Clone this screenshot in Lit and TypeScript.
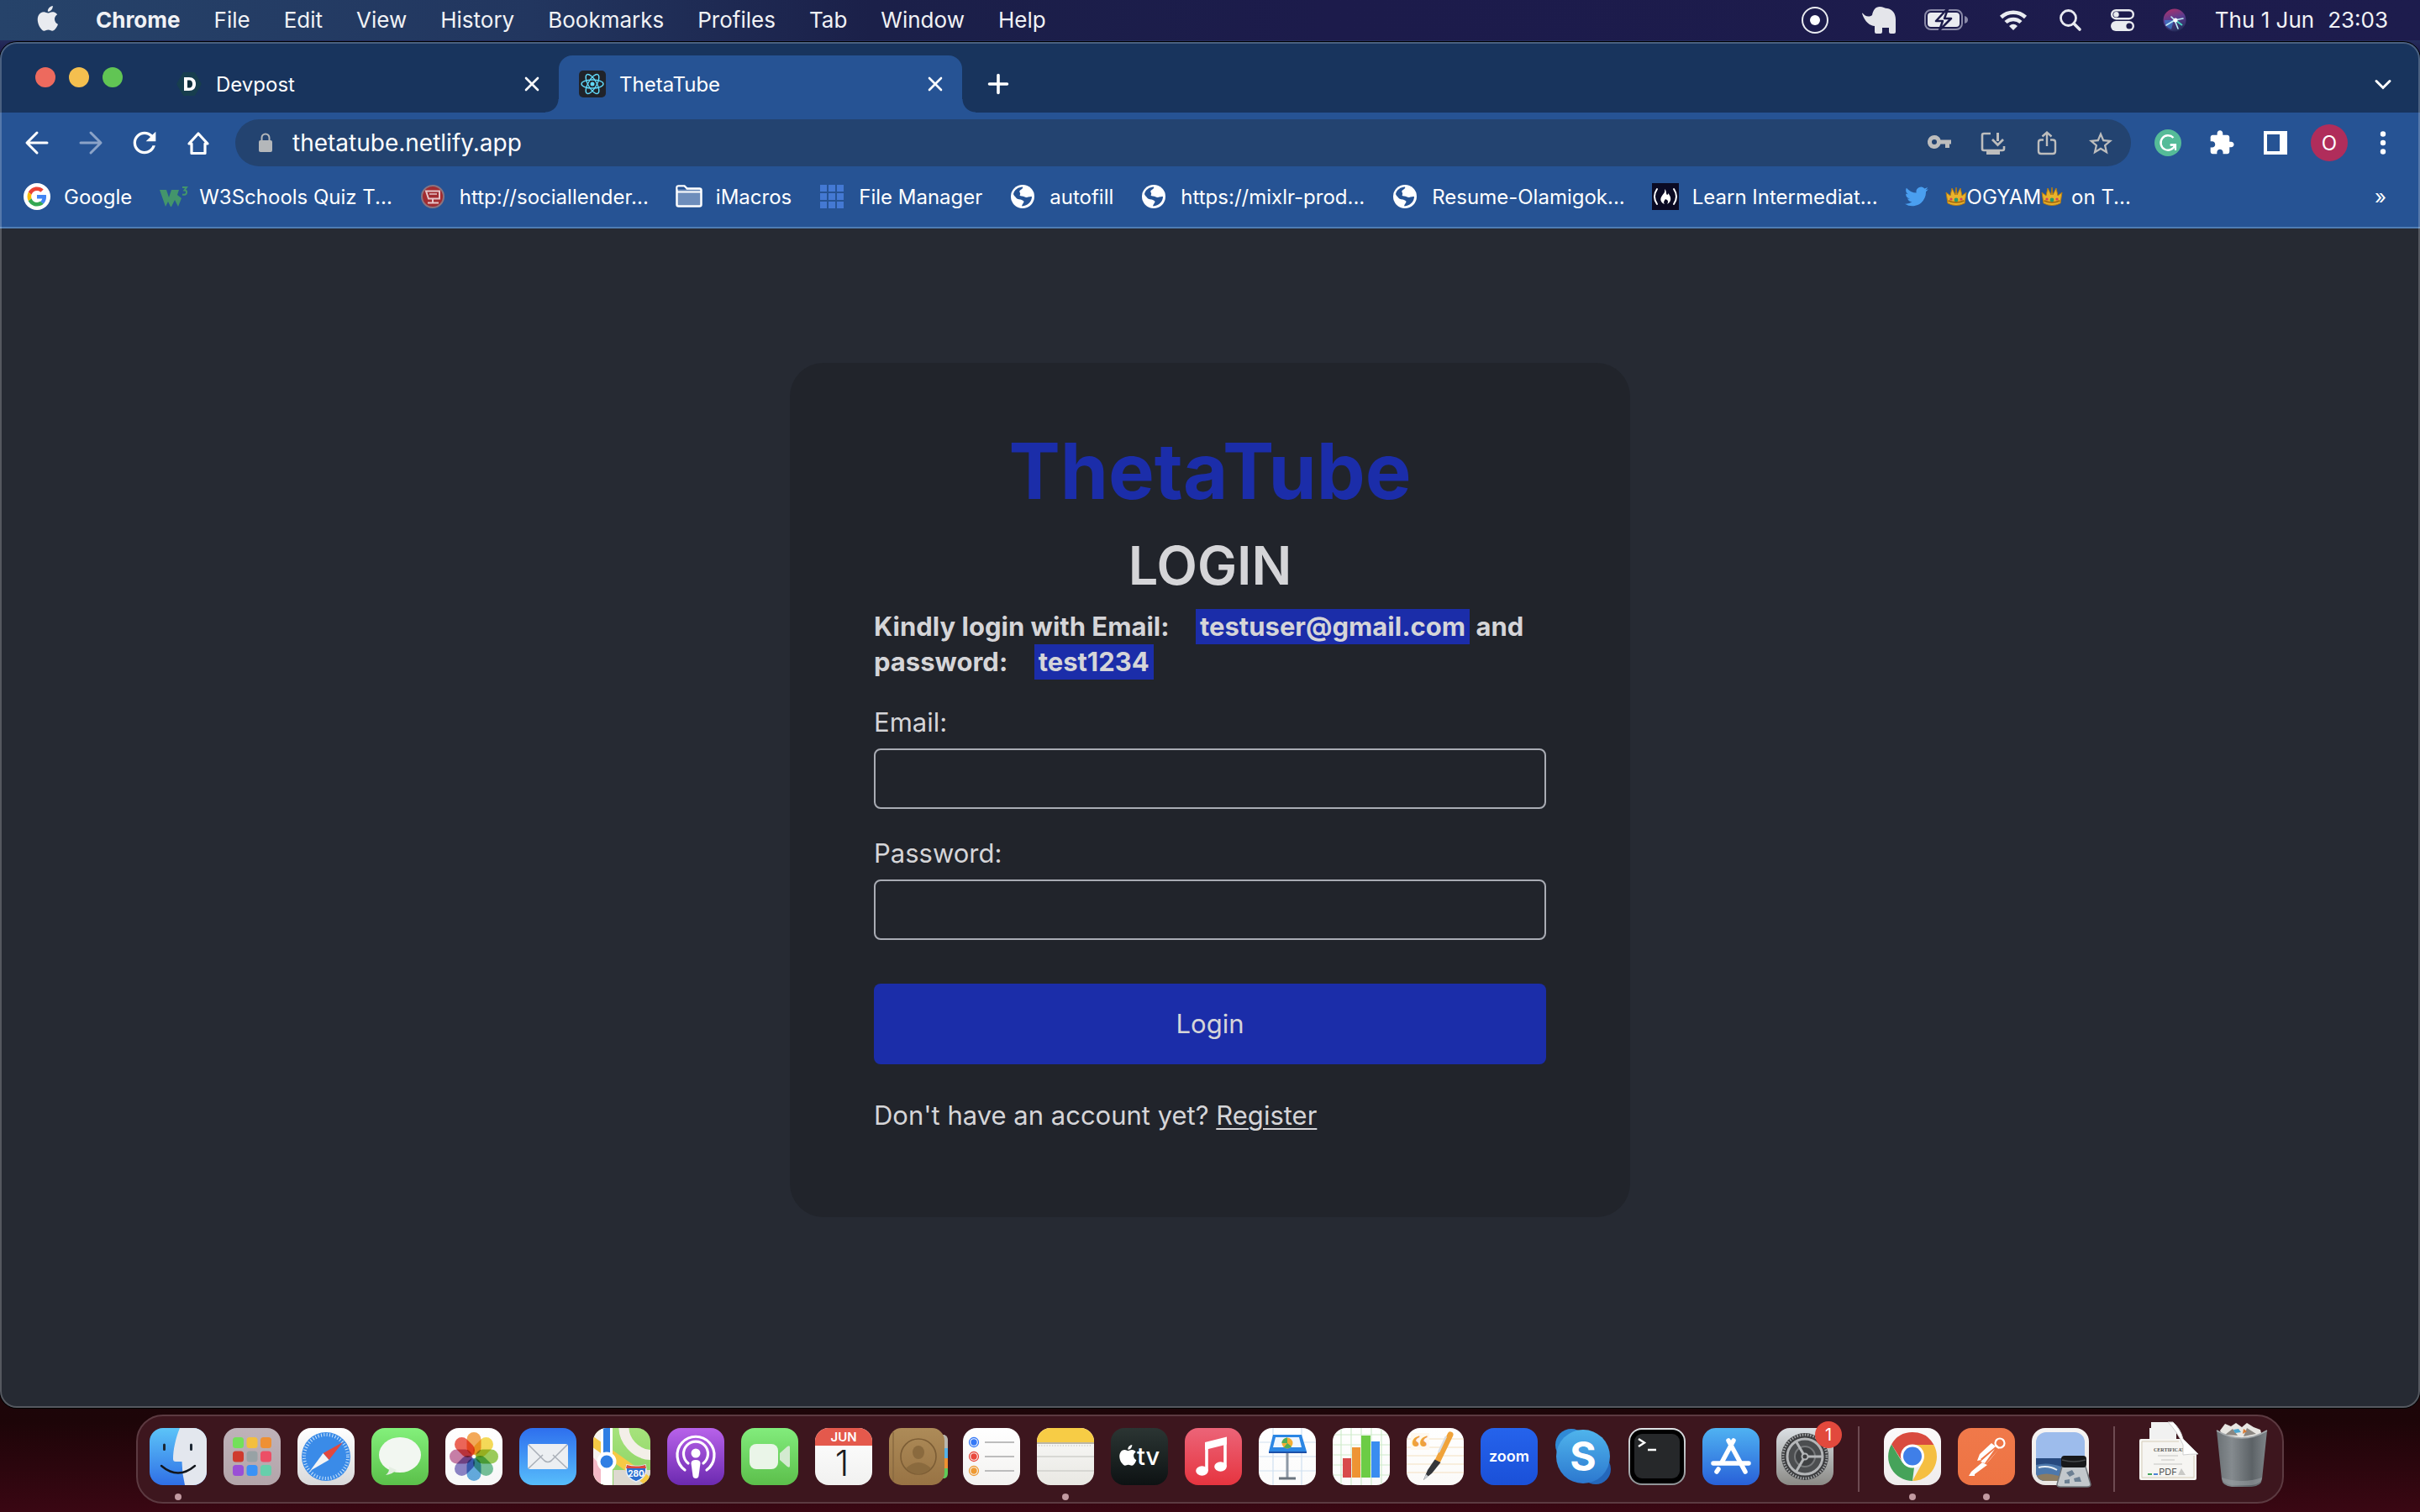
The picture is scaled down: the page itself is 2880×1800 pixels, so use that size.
import { LitElement, html, svg, css, nothing } from "lit";
import { customElement } from "lit/decorators.js";
import { classMap } from "lit/directives/class-map.js";

/* ---------- shared drawing helpers ---------- */

const APPLE =
  "M12.152 6.896c-.948 0-2.415-1.078-3.96-1.04-2.04.027-3.91 1.183-4.961 3.014-2.117 3.675-.546 9.103 1.519 12.09 1.013 1.454 2.208 3.09 3.792 3.039 1.52-.065 2.09-.987 3.935-.987 1.831 0 2.35.987 3.96.948 1.637-.026 2.676-1.48 3.676-2.948 1.156-1.688 1.636-3.325 1.662-3.415-.039-.013-3.182-1.221-3.22-4.857-.026-3.04 2.48-4.494 2.597-4.559-1.429-2.09-3.623-2.324-4.39-2.376-2-.156-3.675 1.09-4.61 1.09zM15.53 3.83c.843-1.012 1.4-2.427 1.245-3.83-1.207.052-2.662.805-3.532 1.818-.78.896-1.454 2.338-1.273 3.714 1.338.104 2.715-.688 3.559-1.701";

const icon32 = (body: unknown) =>
  html`<svg class="icon" width="32" height="32" viewBox="0 0 32 32" aria-hidden="true">${body}</svg>`;

const fade = (id: string, top: string, bottom: string) => svg`
  <linearGradient id=${id} x1="0" y1="0" x2="0" y2="1">
    <stop offset="0" stop-color=${top} /><stop offset="1" stop-color=${bottom} />
  </linearGradient>`;

const tile = (id: string, top: string, bottom: string, body: unknown) => svg`
  <defs>
    ${fade(id, top, bottom)}
    <clipPath id=${id + "-clip"}><rect width="68" height="68" rx="16" /></clipPath>
  </defs>
  <g clip-path=${`url(#${id}-clip)`}>
    <rect width="68" height="68" fill=${`url(#${id})`} />
    ${body}
  </g>`;

/* ---------- menu bar ---------- */

@customElement("menu-bar")
export class MenuBar extends LitElement {
  static styles = css`
    :host {
      display: block;
      font-family: Inter, "Liberation Sans", sans-serif;
    }
    .bar {
      display: flex;
      align-items: center;
      justify-content: space-between;
      height: 48px;
      padding: 0 38px 0 42px;
      background: linear-gradient(90deg, #26436a 0%, #22365f 22%, #1b2049 36%, #1c1b4b 55%, #1d1c4d 100%);
      color: #f1f2f5;
      font-size: 26px;
      line-height: 48px;
      white-space: nowrap;
    }
    .menus,
    .status {
      display: flex;
      align-items: center;
    }
    .menus {
      gap: 40px;
    }
    .status {
      gap: 34px;
    }
    .menu {
      border: 0;
      padding: 0;
      background: none;
      color: inherit;
      font: inherit;
    }
    .app {
      font-weight: 700;
    }
    .clock {
      display: flex;
      gap: 16px;
    }
    svg {
      display: block;
      flex: none;
    }
  `;

  private menus = ["Chrome", "File", "Edit", "View", "History", "Bookmarks", "Profiles", "Tab", "Window", "Help"];

  render() {
    return html`
      <header class="bar">
        <nav class="menus" aria-label="Menu bar">
          <svg width="32" height="48" viewBox="0 0 32 48" aria-hidden="true">
            <path transform="translate(0 7) scale(1.24)" fill="#e9ebf0" d=${APPLE} />
          </svg>
          ${this.menus.map(
            (name, i) => html`<button type="button" class=${classMap({ menu: true, app: i === 0 })}>${name}</button>`
          )}
        </nav>
        <div class="status">
          <svg width="44" height="34" viewBox="0 0 44 34" aria-hidden="true">
            <circle cx="22" cy="17" r="15" fill="none" stroke="#e9ebf0" stroke-width="2" />
            <circle cx="22" cy="17" r="6" fill="#fff" />
          </svg>
          <svg width="40" height="32" viewBox="0 0 40 32" aria-hidden="true">
            <path
              fill="#e4e5ea"
              d="M1 8C3 11 8 13 12 10c1-6 4-10 9-10 4 0 6 2 9 2 6 1 10 6 10 13v15q0 2-2 2h-4q-2 0-2-2v-5h-8v5q0 2-2 2h-5q-2 0-2-2v-7c-5 0-12-5-15-15q0-1 1 0z"
            />
          </svg>
          <svg width="52" height="26" viewBox="0 0 52 26" aria-hidden="true">
            <rect x="1" y="1" width="44" height="23" rx="7" fill="none" stroke="#8a8aa8" stroke-width="2" />
            <rect x="4" y="4" width="38" height="17" rx="4" fill="#e9ebf0" />
            <path d="M48 8q4 1 4 4.500t-4 4.500z" fill="#8a8aa8" />
            <path
              d="M27 0 14 14h8l-4 11 14-14h-8l4-11z"
              fill="#e9ebf0"
              stroke="#1c1b4b"
              stroke-width="2.500"
              stroke-linejoin="round"
            />
          </svg>
          <svg width="40" height="28" viewBox="0 0 40 28" aria-hidden="true" fill="none" stroke="#e9ebf0">
            <path d="M5.500 10.500a21 21 0 0 1 29 0" stroke-width="4.500" />
            <path d="M11 16.500a13 13 0 0 1 18 0" stroke-width="4.500" />
            <path d="M15 21q5-4.500 10 0l-5 5z" fill="#e9ebf0" stroke="none" />
          </svg>
          <svg width="28" height="28" viewBox="0 0 28 28" aria-hidden="true" fill="none" stroke="#e9ebf0">
            <circle cx="11.500" cy="11.500" r="9" stroke-width="2.800" />
            <path d="m18 18 7 7" stroke-width="3.600" stroke-linecap="round" />
          </svg>
          <svg width="28" height="28" viewBox="0 0 28 28" aria-hidden="true">
            <rect x="1.200" y="2.200" width="25.600" height="10" rx="5" fill="none" stroke="#e9ebf0" stroke-width="2.400" />
            <circle cx="6.500" cy="7.200" r="3.200" fill="#e9ebf0" />
            <rect y="15" width="28" height="12" rx="6" fill="#e9ebf0" />
            <circle cx="22" cy="21" r="3.600" fill="#1c1b4b" />
          </svg>
          <svg width="28" height="28" viewBox="0 0 28 28" aria-hidden="true">
            <defs>
              <linearGradient id="siri" x1="0.300" y1="0" x2="0.600" y2="1">
                <stop offset="0" stop-color="#a8326e" />
                <stop offset="0.450" stop-color="#5a3c8e" />
                <stop offset="1" stop-color="#232c58" />
              </linearGradient>
            </defs>
            <circle cx="14" cy="14" r="13.500" fill="url(#siri)" />
            <path d="M2 14a12 12 0 0 0 8 11l3-11z" fill="#3b7fd0" opacity="0.700" />
            <path d="m4 20 10-6 10-2M10 10l4 4 4 10" fill="none" stroke="#bfeef8" stroke-width="1.600" stroke-linecap="round" />
            <path d="m15 14 8 6" stroke="#46d7c0" stroke-width="2" />
            <circle cx="15" cy="14" r="2.500" fill="#fff" />
          </svg>
          <div class="clock"><span>Thu 1 Jun</span><span>23:03</span></div>
        </div>
      </header>
    `;
  }
}

/* ---------- browser chrome ---------- */

const CLOSE = html`<svg width="24" height="24" viewBox="0 0 24 24" aria-hidden="true">
  <path d="m5 5 14 14M19 5 5 19" stroke="#fff" stroke-width="2.600" stroke-linecap="round" />
</svg>`;

const DEVPOST = icon32(svg`
  <path d="M9 2h14l8 14-8 14H9L1 16z" fill="#173e4e" />
  <path d="M10 8h6c5 0 8 3 8 8s-3 8-8 8h-6z" fill="#fff" />
  <path d="M14 11.500h2c3 0 4 2 4 4.500s-1 4.500-4 4.500h-2z" fill="#10303c" />`);

const REACT = icon32(svg`
  <rect width="32" height="32" rx="5" fill="#20232a" />
  <g fill="none" stroke="#61dafb" stroke-width="1.400">
    <ellipse cx="16" cy="16" rx="13" ry="5" />
    <ellipse cx="16" cy="16" rx="13" ry="5" transform="rotate(60 16 16)" />
    <ellipse cx="16" cy="16" rx="13" ry="5" transform="rotate(120 16 16)" />
  </g>
  <circle cx="16" cy="16" r="2.500" fill="#61dafb" />`);

const GLOBE = icon32(svg`
  <circle cx="16" cy="16" r="14" fill="#fff" />
  <path d="M5 13c1-5 6-8.500 11-8.500 1 1-1 3-3 4-2 2 1 3 0 5-1 1 0 2 2 2 3 0 4 2 6 1.500 2-1 5-1 6-1 0 6-5 11-11.500 11.500-1-1 1-3 2-5 0-2-2-2-4-3-3 0-5-1-6-3-1-1-2-2-2.500-3.500z" fill="#265394" />`);

const BOOKMARK_ICONS = {
  google: icon32(svg`
    <circle cx="16" cy="16" r="16" fill="#fff" />
    <g transform="translate(4.500 4.500) scale(0.480)">
      <path fill="#ea4335" d="M24 9.500c3.540 0 6.710 1.220 9.210 3.600l6.850-6.850C35.900 2.380 30.470 0 24 0 14.620 0 6.510 5.380 2.560 13.220l7.980 6.190C12.430 13.720 17.740 9.500 24 9.500z" />
      <path fill="#4285f4" d="M46.980 24.550c0-1.570-.150-3.090-.380-4.550H24v9.020h12.940c-.580 2.960-2.260 5.480-4.780 7.180l7.730 6c4.510-4.180 7.090-10.360 7.090-17.650z" />
      <path fill="#fbbc05" d="M10.530 28.590c-.480-1.450-.760-2.990-.760-4.590s.270-3.140.760-4.590l-7.980-6.190C.920 16.460 0 20.120 0 24c0 3.880.920 7.540 2.560 10.780l7.970-6.190z" />
      <path fill="#34a853" d="M24 48c6.480 0 11.930-2.130 15.890-5.810l-7.730-6c-2.150 1.450-4.920 2.300-8.160 2.300-6.260 0-11.570-4.220-13.470-9.910l-7.980 6.190C6.510 42.620 14.620 48 24 48z" />
    </g>`),
  w3: icon32(svg`
    <path d="M1 8h8l3 9 3-9h9l-2 6 5 4-4 10-4-8-4 8h-1l-3-6-3 6z" fill="#43956b" />
    <path d="M28 5h5l-2.500 3.500q3 0 2.500 3t-5 2" fill="none" stroke="#43956b" stroke-width="2" />`),
  cart: icon32(svg`
    <circle cx="16" cy="16" r="13" fill="#a12c31" stroke="#8a7480" stroke-width="2" />
    <path d="M8 9.500h16v9H11zM16 19v4M10 23.500h13" fill="none" stroke="#e6c4c8" stroke-width="2" />
    <path d="M12 13h9" stroke="#e6c4c8" stroke-width="1.500" />`),
  folder: icon32(svg`
    <path d="M1.500 5.500q0-2 2-2h7l3 3h15q2 0 2 2v17q0 2-2 2h-25q-2 0-2-2z" fill="#6e8dbb" stroke="#fff" stroke-width="2.500" />
    <path d="M2.500 7.500V4.500h7.500l3 3z" fill="#265394" /><path d="M2 10.500h28" stroke="#fff" stroke-width="2" />`),
  grid: icon32(svg`<path fill="#4479d3" d="M2 2h8v8H2zM12 2h8v8h-8zM22 2h8v8h-8zM2 12h8v8H2zM12 12h8v8h-8zM22 12h8v8h-8zM2 22h8v8H2zM12 22h8v8h-8zM22 22h8v8h-8z" />`),
  globe: GLOBE,
  camp: icon32(svg`
    <rect width="32" height="32" fill="#0a0a23" />
    <path d="M6 7q-6 9 0 18M26 7q6 9 0 18" fill="none" stroke="#fff" stroke-width="2" stroke-linecap="round" />
    <path d="M15 7c3 3 1 5 3 7 1 0 1-1 1-2 4 4 5 10-1 13 2-3 1-5-2-6-1 2-3 3-1 6-5-2-6-6-3-10 2-3 4-4 3-8z" fill="#fff" />`),
  twitter: icon32(svg`
    <path transform="translate(0 2) scale(1.160)" fill="#4a9ff0" d="M23.953 4.570a10 10 0 01-2.825.775 4.958 4.958 0 002.163-2.723c-.951.555-2.005.959-3.127 1.184a4.920 4.920 0 00-8.384 4.482C7.690 8.095 4.067 6.130 1.640 3.162a4.822 4.822 0 00-.666 2.475c0 1.710.870 3.213 2.188 4.096a4.904 4.904 0 01-2.228-.616v.060a4.923 4.923 0 003.946 4.827 4.996 4.996 0 01-2.212.085 4.936 4.936 0 004.604 3.417 9.867 9.867 0 01-6.102 2.105c-.390 0-.779-.023-1.170-.067a13.995 13.995 0 007.557 2.209c9.053 0 13.998-7.496 13.998-13.985 0-.210 0-.420-.015-.630A9.935 9.935 0 0024 4.590z" />`),
};

const CROWN = html`<svg class="crown" width="26" height="24" viewBox="0 0 26 24" role="img" aria-label="crown">
  <path d="M3 20 1 7l5 4 2-9 4 8 1-9 1 9 4-8 2 9 5-4-2 13q-10 5-20 0z" fill="#e9b22c" stroke="#b37a12" stroke-width="1" />
  <path d="M3.500 17q9.500 4 19 0" fill="none" stroke="#a96f12" stroke-width="2" />
  <circle cx="13" cy="16" r="2.400" fill="#2b9a68" />
  <circle cx="7" cy="15" r="1.600" fill="#d2415f" /><circle cx="19" cy="15" r="1.600" fill="#d2415f" />
</svg>`;

const BACK = icon32(svg`<path d="M28 16H5M16 4 4 16l12 12" fill="none" stroke="#fff" stroke-width="3" stroke-linejoin="round" stroke-linecap="round" />`);
const FORWARD = icon32(svg`<path d="M4 16h23M16 4l12 12-12 12" fill="none" stroke="#8ba3c8" stroke-width="3" stroke-linejoin="round" stroke-linecap="round" />`);
const RELOAD = icon32(svg`<path transform="translate(-4 -4) scale(1.667)" fill="#fff" d="M17.650 6.350C16.200 4.900 14.210 4 12 4c-4.420 0-7.990 3.580-7.990 8s3.570 8 7.990 8c3.730 0 6.840-2.550 7.730-6h-2.080c-.820 2.330-3.040 4-5.650 4-3.310 0-6-2.690-6-6s2.690-6 6-6c1.660 0 3.140.690 4.220 1.780L13 11h7V4l-2.350 2.350z" />`);
const HOME = icon32(svg`<path d="M16 5 5 17h3v11.500h16V17h3z" fill="none" stroke="#fff" stroke-width="3.200" stroke-linejoin="round" />`);
const LOCK = icon32(svg`
  <rect x="8" y="13" width="16" height="14" rx="2" fill="#b4b7ba" />
  <path d="M11.500 14v-4a4.500 4.500 0 0 1 9 0v4" fill="none" stroke="#b4b7ba" stroke-width="2" />`);

const PILL_ICONS = [
  { label: "Saved passwords", art: icon32(svg`<path fill="#bdbdbd" fill-rule="evenodd" d="M10 7a8 8 0 0 1 7.500 5.500H30v5h-2V22h-5v-4.500h-5.500A8 8 0 1 1 10 7zm0 5a3 3 0 1 0 0 6 3 3 0 0 0 0-6z" />`) },
  { label: "Install app", art: icon32(svg`
    <path d="M13 5H5q-2 0-2 2v16q0 2 2 2h22q2 0 2-2v-3" fill="none" stroke="#bdbdbd" stroke-width="2.600" />
    <path d="M8 25h16v5H8zM20 4h3v10h-3z" fill="#bdbdbd" />
    <path d="m15 12 6.500 6.500L28 12" fill="none" stroke="#bdbdbd" stroke-width="2.800" />`) },
  { label: "Share", art: icon32(svg`
    <path d="M12 12.500H9q-3 0-3 3V26q0 3 3 3h14q3 0 3-3V15.500q0-3-3-3h-3M16 20V4M10.500 8.500 16 3.500l5.500 5" fill="none" stroke="#bdbdbd" stroke-width="2.400" />`) },
  { label: "Bookmark this tab", art: icon32(svg`<path transform="translate(-0.800 0) scale(1.400)" fill="#bdbdbd" d="M22 9.240l-7.190-.620L12 2 9.190 8.630 2 9.240l5.460 4.730L5.820 21 12 17.270 18.180 21l-1.630-7.030L22 9.240zM12 15.400l-3.760 2.270 1-4.280-3.320-2.880 4.380-.380L12 6.100l1.710 4.040 4.380.380-3.320 2.880 1 4.280L12 15.400z" />`) },
];

const ACTION_ICONS = [
  { label: "Grammarly", art: icon32(svg`
    <circle cx="16" cy="16" r="16" fill="#55bb98" />
    <path d="M22.500 10a8.700 8.700 0 1 0 2 8.500h-5.500" fill="none" stroke="#fff" stroke-width="2.400" />
    <path d="M18.500 18.500H25V25" fill="none" stroke="#fff" stroke-width="2.200" />`) },
  { label: "Extensions", art: icon32(svg`<path transform="scale(1.330)" fill="#fff" d="M20.500 11H19V7c0-1.100-.900-2-2-2h-4V3.500C13 2.120 11.880 1 10.500 1S8 2.120 8 3.500V5H4c-1.100 0-1.990.900-1.990 2v3.800H3.500c1.490 0 2.700 1.210 2.700 2.700s-1.210 2.700-2.700 2.700H2V20c0 1.100.900 2 2 2h3.800v-1.500c0-1.490 1.210-2.700 2.700-2.700 1.490 0 2.700 1.210 2.700 2.700V22H17c1.100 0 2-.900 2-2v-4h1.500c1.380 0 2.500-1.120 2.500-2.500S21.880 11 20.500 11z" />`) },
  { label: "Side panel", art: icon32(svg`<path fill="#fff" fill-rule="evenodd" d="M2 2h28v28H2zM6 6v20h15V6z" />`) },
];

const MORE = icon32(svg`<g fill="#fff"><circle cx="16" cy="5.500" r="3.200" /><circle cx="16" cy="16" r="3.200" /><circle cx="16" cy="26.500" r="3.200" /></g>`);

@customElement("browser-window")
export class BrowserWindow extends LitElement {
  static styles = css`
    :host {
      display: flex;
      flex-direction: column;
      font-family: Inter, "Liberation Sans", sans-serif;
      color: #fff;
    }
    .window {
      position: relative;
      flex: 1;
      display: flex;
      flex-direction: column;
      margin-top: 2px;
      border-radius: 20px;
      overflow: hidden;
      background: #262a33;
      box-shadow: 0 0 0 1px #000;
    }
    .window::after {
      content: "";
      position: absolute;
      inset: 0;
      border: 2px solid rgba(255, 255, 255, 0.22);
      border-radius: 20px;
      pointer-events: none;
    }
    button {
      display: flex;
      flex: none;
      border: 0;
      padding: 0;
      background: none;
      color: inherit;
      font: inherit;
    }
    svg {
      display: block;
      flex: none;
      overflow: visible;
    }
    .tabs {
      display: flex;
      align-items: flex-end;
      height: 84px;
      padding-right: 32px;
      background: #18345d;
    }
    .lights {
      display: flex;
      align-self: center;
      gap: 16px;
      padding: 0 39px 0 42px;
    }
    .light {
      width: 24px;
      height: 24px;
      border-radius: 50%;
    }
    .red {
      background: #ed6a5e;
    }
    .amber {
      background: #f4bf4f;
    }
    .green {
      background: #61c554;
    }
    .tab {
      position: relative;
      display: flex;
      align-items: center;
      gap: 16px;
      width: 480px;
      height: 68px;
      box-sizing: border-box;
      padding: 0 20px 0 24px;
      border-radius: 16px 16px 0 0;
      font-size: 24px;
    }
    .tab.active {
      background: #265394;
    }
    .tab.active::before,
    .tab.active::after {
      content: "";
      position: absolute;
      bottom: 0;
      width: 16px;
      height: 16px;
    }
    .tab.active::before {
      left: -16px;
      background: radial-gradient(circle at 0 0, transparent 15px, #265394 16px);
    }
    .tab.active::after {
      right: -16px;
      background: radial-gradient(circle at 100% 0, transparent 15px, #265394 16px);
    }
    .title {
      flex: 1;
      white-space: nowrap;
    }
    .strip-button {
      align-items: center;
      height: 68px;
    }
    .new-tab {
      margin: 0 auto 0 31px;
    }
    .toolbar {
      display: flex;
      align-items: center;
      gap: 28px;
      height: 72px;
      padding: 0 28px;
      background: #265394;
    }
    .group {
      display: flex;
      align-items: center;
      gap: 32px;
    }
    .pill {
      flex: 1;
      display: flex;
      align-items: center;
      gap: 16px;
      height: 56px;
      box-sizing: border-box;
      padding: 0 20px;
      border-radius: 28px;
      background: #234370;
    }
    .address {
      flex: 1;
      min-width: 0;
      border: 0;
      padding: 0;
      background: none;
      color: #fff;
      outline: none;
      font: inherit;
      font-size: 28px;
    }
    .avatar {
      align-items: center;
      justify-content: center;
      width: 44px;
      height: 44px;
      margin: 0 -6px;
      border-radius: 50%;
      background: #b02d5b;
      font-size: 24px;
    }
    .bookmarks {
      display: flex;
      align-items: flex-start;
      gap: 32px;
      height: 64px;
      padding: 0 28px;
      border-bottom: 2px solid #4f7cb3;
      background: #265394;
      font-size: 24px;
    }
    .bookmark {
      display: flex;
      align-items: center;
      gap: 16px;
      height: 56px;
      color: #fff;
      text-decoration: none;
      white-space: nowrap;
    }
    .label {
      display: flex;
      align-items: center;
    }
    .on {
      margin-left: 10px;
    }
    .overflow {
      align-items: center;
      height: 56px;
      margin-left: auto;
      padding-right: 12px;
    }
    .page {
      flex: 1;
      padding: 160px 24px 24px;
      background: #262a33;
    }
  `;

  private bookmarks: { icon: keyof typeof BOOKMARK_ICONS; text: unknown }[] = [
    { icon: "google", text: "Google" },
    { icon: "w3", text: "W3Schools Quiz T..." },
    { icon: "cart", text: "http://sociallender..." },
    { icon: "folder", text: "iMacros" },
    { icon: "grid", text: "File Manager" },
    { icon: "globe", text: "autofill" },
    { icon: "globe", text: "https://mixlr-prod..." },
    { icon: "globe", text: "Resume-Olamigok..." },
    { icon: "camp", text: "Learn Intermediat..." },
    { icon: "twitter", text: html`${CROWN}<span>OGYAM</span>${CROWN}<span class="on">on T...</span>` },
  ];

  private tab(title: string, art: unknown, active: boolean) {
    return html`<div class=${classMap({ tab: true, active })} role="tab" aria-selected=${active}>
      ${art}<span class="title">${title}</span>
      <button type="button" aria-label="Close tab">${CLOSE}</button>
    </div>`;
  }

  render() {
    return html`
      <section class="window">
        <div class="tabs" role="tablist">
          <div class="lights">
            <button type="button" class="light red" aria-label="Close"></button>
            <button type="button" class="light amber" aria-label="Minimise"></button>
            <button type="button" class="light green" aria-label="Zoom"></button>
          </div>
          ${this.tab("Devpost", DEVPOST, false)} ${this.tab("ThetaTube", REACT, true)}
          <button type="button" class="strip-button new-tab" aria-label="New tab">
            <svg width="24" height="24" viewBox="0 0 24 24" aria-hidden="true">
              <path d="M12 1.500v21M1.500 12h21" stroke="#fff" stroke-width="3.600" stroke-linecap="round" />
            </svg>
          </button>
          <button type="button" class="strip-button" aria-label="Search tabs">
            <svg width="24" height="24" viewBox="0 0 24 24" aria-hidden="true">
              <path d="m4 8.500 8 8 8-8" fill="none" stroke="#fff" stroke-width="3" stroke-linecap="round" />
            </svg>
          </button>
        </div>
        <div class="toolbar">
          <div class="group">
            <button type="button" aria-label="Back">${BACK}</button>
            <button type="button" aria-label="Forward">${FORWARD}</button>
            <button type="button" aria-label="Reload">${RELOAD}</button>
            <button type="button" aria-label="Home">${HOME}</button>
          </div>
          <div class="pill">
            ${LOCK}
            <input class="address" type="text" aria-label="Address" .value=${"thetatube.netlify.app"} />
            <div class="group">
              ${PILL_ICONS.map((i) => html`<button type="button" aria-label=${i.label}>${i.art}</button>`)}
            </div>
          </div>
          <div class="group">
            ${ACTION_ICONS.map((i) => html`<button type="button" aria-label=${i.label}>${i.art}</button>`)}
            <button type="button" class="avatar" aria-label="Profile O">O</button>
            <button type="button" aria-label="More">${MORE}</button>
          </div>
        </div>
        <nav class="bookmarks" aria-label="Bookmarks">
          ${this.bookmarks.map(
            (b) => html`<a class="bookmark" href="#">${BOOKMARK_ICONS[b.icon]}<span class="label">${b.text}</span></a>`
          )}
          <button type="button" class="overflow" aria-label="More bookmarks">»</button>
        </nav>
        <main class="page"><slot></slot></main>
      </section>
    `;
  }
}

/* ---------- login page ---------- */

@customElement("login-card")
export class LoginCard extends LitElement {
  static styles = css`
    :host {
      display: block;
      font-family: Inter, "Liberation Sans", sans-serif;
      font-size: 31px;
      line-height: 42px;
      color: #d5d5d8;
    }
    .card {
      max-width: 1000px;
      box-sizing: border-box;
      margin: 0 auto;
      padding: 69px 100px 100px;
      border-radius: 40px;
      background: #21242b;
    }
    .brand {
      margin: 0;
      color: #1b2da9;
      font-size: 92px;
      line-height: 120px;
      font-weight: 700;
      text-align: center;
    }
    .heading {
      margin: 10px 0;
      font-size: 63px;
      line-height: 84px;
      font-weight: 600;
      text-align: center;
    }
    .hint {
      margin: 0 0 30px;
      font-weight: 700;
    }
    .mark {
      display: inline-block;
      margin-left: 24px;
      padding: 0 5px;
      background: #1b2da9;
      vertical-align: top;
    }
    .field {
      display: flex;
      flex-direction: column;
      gap: 10px;
      margin-bottom: 32px;
    }
    .input {
      height: 72px;
      box-sizing: border-box;
      padding: 0 16px;
      border: 2px solid #a9acb4;
      border-radius: 8px;
      background: transparent;
      color: inherit;
      font: inherit;
    }
    .submit {
      width: 100%;
      height: 96px;
      margin: 20px 0 40px;
      border: 0;
      border-radius: 8px;
      background: #1b2da9;
      color: inherit;
      font: inherit;
    }
    .note {
      margin: 0;
    }
    .link {
      color: inherit;
      text-underline-offset: 4px;
      text-decoration-thickness: 2px;
    }
  `;

  render() {
    return html`
      <form class="card" @submit=${(e: Event) => e.preventDefault()}>
        <h1 class="brand">ThetaTube</h1>
        <h2 class="heading">LOGIN</h2>
        <p class="hint">
          <span>Kindly login with Email:</span> <span class="mark">testuser@gmail.com</span> <span>and</span>
          <span>password:</span> <span class="mark">test1234</span>
        </p>
        <div class="field">
          <label for="email">Email:</label>
          <input class="input" id="email" type="email" />
        </div>
        <div class="field">
          <label for="password">Password:</label>
          <input class="input" id="password" type="password" />
        </div>
        <button class="submit" type="submit">Login</button>
        <p class="note">Don't have an account yet? <a class="link" href="#">Register</a></p>
      </form>
    `;
  }
}

/* ---------- dock ---------- */

const petal = (angle: number, color: string) =>
  svg`<rect x="25.500" y="5" width="17" height="27" rx="8.500" fill=${color} opacity="0.850" transform=${`rotate(${angle} 34 34)`} style="mix-blend-mode:multiply" />`;

const FINDER = tile("finder", "#5cc4f8", "#2f6fe6", svg`
  <path d="M36 0C31 12 28 26 28 37q0 3 3 3h7.500q0 14 3.500 28h26V0z" fill="#e3e7ee" />
  <path d="M17.500 20v5.500M49.500 20v5.500" stroke="#1c2733" stroke-width="3" stroke-linecap="round" />
  <path d="M14 45q20 17 40 0" fill="none" stroke="#12161c" stroke-width="2.400" stroke-linecap="round" />`);

const LAUNCHPAD = tile("launch", "#bfb2b9", "#b3a5aa", svg`
  ${["#73e05a", "#f3bf3f", "#ee9035", "#cf3a2e", "#98a2a5", "#ec4f66", "#9a4fd6", "#3a92f5", "#66cfab"].map(
    (c, i) => svg`<rect x=${11 + (i % 3) * 16.5} y=${11 + Math.floor(i / 3) * 16.5} width="13" height="13" rx="3.500" fill=${c} />`
  )}`);

const SAFARI = tile("safari", "#ffffff", "#d9d9da", svg`
  <circle cx="34" cy="34" r="29" fill="#3a8be8" />
  <circle cx="34" cy="34" r="26" fill="none" stroke="#cfe6fb" stroke-width="4" stroke-dasharray="1 2.400" />
  <path d="M54 17 37.500 38l-7-8z" fill="#e2483d" />
  <path d="m15 51 15.500-21 7 8z" fill="#f3f4f5" />`);

const MESSAGES = tile("msg", "#83f07b", "#5bc04a", svg`
  <ellipse cx="34" cy="32" rx="25" ry="21" fill="#f2f7f1" />
  <path d="M21 46q1 6-4 10 8-1 13-6z" fill="#e4efe2" />`);

const PHOTOS = tile("photos", "#ffffff", "#f7f7f7", svg`
  ${["#f39a3c", "#f5d53b", "#8cc63f", "#5fb98a", "#4a9fdc", "#7a6fbf", "#c06a9a", "#ea4b3c"].map((c, i) => petal(i * 45, c))}`);

const MAIL = tile("mail", "#2e6fee", "#57bdfb", svg`
  <rect x="10" y="19" width="48" height="30" rx="3" fill="#eceff2" />
  <path d="m11 48 17-16m29 16L40 32M11 20l19 19q4 3 8 0l19-19" fill="none" stroke="#aab0b8" stroke-width="1.600" />`);

const MAPS = tile("maps", "#a6e37c", "#8ad161", svg`
  <path d="M0 0h10v68H0z" fill="#f6f3ee" /><path d="M0 35v33h9V45z" fill="#f4b9c6" />
  <path d="M24 50h44v18H24z" fill="#ddd9d0" />
  <path d="M37-8a34 34 0 0 0 36 40" fill="none" stroke="#f3efe8" stroke-width="12" />
  <path d="m-4 14 76 54" stroke="#f6c945" stroke-width="11" />
  <path d="M16 0v68" stroke="#fff" stroke-width="14" /><path d="M16 0v38" stroke="#2f7fe4" stroke-width="8" />
  <circle cx="16" cy="40" r="9.500" fill="#2f7fe4" stroke="#fff" stroke-width="4" />
  <path d="M40 44q11 3 22 0 4 14-11 20Q36 58 40 44z" fill="#2b6fd0" stroke="#e8eef5" stroke-width="1.500" />
  <path d="M40 44q11 3 22 0l1 4H39z" fill="#d8483f" />
  <text x="51" y="58" font-size="10" font-weight="700" fill="#fff" text-anchor="middle">280</text>`);

const PODCASTS = tile("pod", "#b862ea", "#6c2ab0", svg`
  <g fill="none" stroke="#fff" stroke-width="3.200" stroke-linecap="round">
    <path d="M21 50a22 22 0 1 1 26 0" /><path d="M25 42a14.500 14.500 0 1 1 18 0" />
  </g>
  <circle cx="34" cy="30" r="5.500" fill="#fff" />
  <path d="M28.500 42q0-4 5.500-4t5.500 4l-2 15q-.500 3-3.500 3t-3.500-3z" fill="#fff" />`);

const FACETIME = tile("face", "#82ec7c", "#5cbf4b", svg`
  <rect x="10" y="19" width="34" height="30" rx="8" fill="#eaf5e8" />
  <path d="M46 30l9-8q3-2 3 1v22q0 3-3 1l-9-8z" fill="#d3ead0" />`);

const CALENDAR = tile("cal", "#ffffff", "#f1f1f0", svg`
  <rect width="68" height="21" fill="#e4594c" />
  <text x="34" y="16" font-size="15" font-weight="600" fill="#fff" text-anchor="middle">JUN</text>
  <text x="32" y="57" font-size="42" font-weight="300" fill="#1d1d1f" text-anchor="middle">1</text>`);

const CONTACTS = svg`
  <defs>${fade("book", "#ad8b58", "#987344")}</defs>
  <path d="M60 8h6q4 2 4 6v10H60z" fill="#b9b6ae" /><path d="M60 24h10v12H60z" fill="#55b2e8" />
  <path d="M60 36h10v12H60z" fill="#ef9131" /><path d="M60 48h10v6q0 5-4 6h-6z" fill="#5ecb58" />
  <rect width="66" height="68" rx="15" fill="url(#book)" />
  <path d="M5 5v58" stroke="#8a6a40" stroke-width="1.500" />
  <circle cx="35" cy="34" r="21" fill="none" stroke="#7c5d35" stroke-width="1.600" />
  <ellipse cx="35" cy="29" rx="7" ry="8" fill="#8a6a3e" /><path d="M20 48q15-14 30 0-15 14-30 0z" fill="#8a6a3e" />`;

const REMINDERS = tile("rem", "#ffffff", "#f3f2f0", svg`
  ${["#3478f6", "#e9483d", "#ee9a33"].map((c, i) => svg`
    <circle cx="13" cy=${17 + i * 17} r="5.500" fill="none" stroke=${c} stroke-width="1.300" />
    <circle cx="13" cy=${17 + i * 17} r="3.700" fill=${c} />
    <path d=${`M26 ${17 + i * 17}h35`} stroke="#bdbdbd" stroke-width="2" />`)}`);

const NOTES = tile("notes", "#fafaf9", "#e9e8e3", svg`
  <rect width="68" height="17" fill="#f7cc45" />
  <path d="M0 18h68" stroke="#a7a18c" stroke-width="1.500" />
  <path d="M2 21h64" stroke="#b9b9b4" stroke-width="1.200" stroke-dasharray="1.200 2" />
  <path d="M0 34h68M0 51h68" stroke="#cfcfcb" stroke-width="1.500" />`);

const TV = tile("tv", "#2b3533", "#0d1213", svg`
  <path transform="translate(8 20) scale(1.030)" fill="#fff" d=${APPLE} />
  <text x="31" y="44" font-size="29" font-weight="500" fill="#fff">tv</text>`);

const MUSIC = tile("music", "#ec6478", "#e6343f", svg`
  <path d="M26 18v33M48 12v34" fill="none" stroke="#fff" stroke-width="3.600" />
  <path d="m24 17 26-6.500v9L24 26z" fill="#fff" />
  <ellipse cx="20.500" cy="51" rx="7.300" ry="5.800" fill="#fff" /><ellipse cx="42.500" cy="46" rx="7.300" ry="5.800" fill="#fff" />`);

const KEYNOTE = tile("key", "#ffffff", "#fbfbfb", svg`
  <path d="M0 17h68M0 34h68M0 51h68M17 0v68M51 0v68" stroke="#cfe0f0" stroke-width="1.200" />
  <path d="M17 8h34l6 20H12z" fill="#2b86e4" /><path d="M20 11h28l3 12H17z" fill="#eef6ff" />
  <path d="M12 28h45v2H12z" fill="#1c50a8" />
  <circle cx="34" cy="18" r="6.500" fill="#f3ad33" /><path d="M34 18V11.500a6.500 6.500 0 0 0-6.500 6.500zM34 18l5 4a6.500 6.500 0 0 1-9 1z" fill="#4fae57" />
  <path d="M34 30v30" stroke="#8d98a5" stroke-width="3" /><path d="M24 60h20" stroke="#6b747e" stroke-width="3" />`);

const NUMBERS = tile("num", "#ffffff", "#fafafa", svg`
  <path d="M0 8h68M0 20h68M0 32h68M0 44h68M0 56h68M10 0v68M22 0v68M34 0v68M46 0v68M58 0v68" stroke="#cfeccb" stroke-width="1.200" />
  <rect x="12" y="36" width="10" height="23" fill="#d84b4b" /><rect x="23" y="23" width="10" height="36" fill="#ee9433" />
  <rect x="34" y="9" width="11" height="50" fill="#6ccc45" /><rect x="46" y="16" width="10" height="43" fill="#3a8df0" />`);

const PAGES = tile("pages", "#ffffff", "#fbfaf8", svg`
  <path d="M0 13h68M0 23h68M0 33h68M0 43h68M0 53h68" stroke="#f4dfc0" stroke-width="1.200" />
  <path d="M5 6h22v20H5z" fill="#fff8ee" />
  <text x="5" y="37" font-size="42" font-weight="700" fill="#efa13c" font-family="Liberation Serif, serif">“</text>
  <path d="m52 8-15 31" stroke="#f0a33a" stroke-width="7" stroke-linecap="round" />
  <path d="m47 10-9 19" stroke="#d8dde2" stroke-width="2.400" />
  <path d="M33.500 37.500 25 50l-5 12 10-8 10.500-13z" fill="#34363a" /><path d="m20 62 3-7 3 2.500z" fill="#c9ced2" />`);

const ZOOM = tile("zoom", "#2563ec", "#1a50d8", svg`
  <text x="34" y="40" font-size="18" font-weight="600" fill="#fff" text-anchor="middle">zoom</text>`);

const SKYPE = svg`
  <defs>${fade("skype", "#4fb4ec", "#2c78cf")}</defs>
  <circle cx="20" cy="20" r="19" fill="#2f8ad6" /><circle cx="49" cy="49" r="18" fill="#2467bb" />
  <circle cx="34" cy="34" r="32" fill="url(#skype)" />
  <text x="34" y="51" font-size="48" font-weight="700" fill="#fff" text-anchor="middle">S</text>`;

const TERMINAL = tile("term", "#dfe3e6", "#8f9396", svg`
  <rect x="2" y="2" width="64" height="64" rx="14" fill="#000" /><rect x="7" y="7" width="54" height="53" rx="9" fill="#26282a" />
  <path d="m12 13 7 4.500-7 4.500M23 26h10" fill="none" stroke="#fff" stroke-width="2.400" />`);

const APPSTORE = tile("store", "#4fb2f2", "#2860d8", svg`
  <g stroke="#fff" stroke-width="5.500" stroke-linecap="round" fill="none">
    <path d="M37 15 23 41M31 15l20 37" /><path d="M13 42h42" /><path d="m19 49-2 3" />
  </g>`);

const SETTINGS = tile("set", "#dbe0e4", "#8b8a86", svg`
  <circle cx="34" cy="34" r="28" fill="#3c3d3f" />
  <circle cx="34" cy="34" r="26" fill="none" stroke="#a5a7a9" stroke-width="3" stroke-dasharray="1.500 1.700" />
  <circle cx="34" cy="34" r="21" fill="#4c4e50" stroke="#b4b6b8" stroke-width="3" />
  <circle cx="34" cy="34" r="12" fill="#3f4143" stroke="#77797b" stroke-width="2" />
  <path d="M34 34h21M34 34 23.500 16M34 34 23.500 52" stroke="#b4b6b8" stroke-width="3" /><circle cx="34" cy="34" r="3.500" fill="#3c3d3f" stroke="#b4b6b8" stroke-width="2" />`);

const CHROME = tile("chrome", "#fbfafa", "#efecec", svg`
  <path d="M34 20h25.400q-8-15-25.400-15L9 19.500 22 40z" fill="#d94b3f" />
  <path d="M9 19.500q8-14.500 25-14.500v15z" fill="#d94b3f" />
  <path d="M46 41 34 63A29 29 0 0 0 59.400 20H34z" fill="#f5bf41" />
  <path d="M9 19.500 22 41l14 6-2 16A29 29 0 0 1 9 19.500z" fill="#46a35a" />
  <circle cx="34" cy="33.500" r="14" fill="#fff" /><circle cx="34" cy="33.500" r="11" fill="#3f7fe8" />`);

const POSTMAN = tile("post", "#f0794a", "#ed7343", svg`
  <circle cx="50" cy="18" r="5.500" fill="none" stroke="#fff" stroke-width="2.200" />
  <path d="m45 22-18 15 1 1-5 1 3-8 14-13zM44 25 32 42l-5-2zM49 25 38 38l-5 5z" fill="#fff" />
  <path d="m29 41 6 3-15 11v2h-7l3-5z" fill="#fff" /><path d="m45 20 4 4" stroke="#fff" stroke-width="2" />`);

const PREVIEW = svg`
  ${tile("prev", "#f7f5f4", "#e9e6e4", svg`
    <rect x="5" y="5" width="58" height="58" rx="12" fill="#9dbcec" />
    <path d="M5 36h58v15q0 12-12 12H17Q5 63 5 51z" fill="#27497f" />
    <path d="M5 44q14-4 30 2t28 0v8q-2 9-12 9H17Q5 63 5 51z" fill="#4d78ac" />
    <path d="M6 57q10-5 26 0v6H17Q9 63 6 57z" fill="#8c7c62" /><path d="M8 47q12-3 22 3" stroke="#e7eef5" stroke-width="2" fill="none" />`)}
  <path d="M36 46h28l6 21q0 3-4 3H34q-4 0-4-3z" fill="#c3c8cc" stroke="#6f757a" stroke-width="1.500" />
  <path d="m41 53 7-3 3 5-6 3zM50 60l7-2 2 6h-8zM39 62l6-1v5h-6z" fill="#6c7f92" />
  <rect x="35" y="33" width="30" height="14" rx="4" fill="#17181a" /><path d="M36 38q14 4 28 0" stroke="#44474a" stroke-width="1.500" fill="none" />`;

const PDF = svg`
  <path d="M14-7h20l10 8v21H12V0h2z" fill="#f1f1f1" />
  <path d="M0 15q0-2 2-2h48l18 18v29q0 2-2 2H2q-2 0-2-2z" fill="#f6f5f2" />
  <path d="M3 16h44M3 16v43h62V33" fill="none" stroke="#d5cdb8" stroke-width="1" />
  <text x="17" y="28" font-size="6" font-weight="700" fill="#555" font-family="Liberation Serif, serif">CERTIFICATE</text>
  <path d="M34-7h6q9 8 12 20l18 18q-10 0-18 1V20Q45 4 34-7z" fill="#fff" stroke="#d0d0d0" stroke-width="1" />
  <path d="M22 33h24M26 38h16M17 43h34" stroke="#c5c5c2" stroke-width="1" />
  <text x="34" y="56" font-size="11" fill="#555" text-anchor="middle">PDF</text>
  <path d="M10 55h5" stroke="#43a65a" stroke-width="2" /><path d="M17 55h5" stroke="#4f83d6" stroke-width="2" /><path d="m46 56 4-8 5 8z" fill="#c9c9c6" />`;

const TRASH = svg`
  <defs><linearGradient id="bin" x1="0" y1="0" x2="1" y2="0">
    <stop offset="0" stop-color="#6b7175" /><stop offset="0.300" stop-color="#858b8f" /><stop offset="0.700" stop-color="#5c6266" /><stop offset="1" stop-color="#7f8589" />
  </linearGradient></defs>
  <path d="m8 3 6-8 7 3 6-4 7 5 6-5 8 5 8 3 2 8-24 5L10 8z" fill="#e8e6e2" />
  <path d="m14 8 9-7 6 8zM36 10l4-10 11 7z" fill="#8b8782" /><path d="m24 2 6-1 3 4-7 1z" fill="#4aa6cf" /><path d="m36 1 4 3-5 3z" fill="#d97b33" />
  <path d="M4 3q30 18 60 0l-6 58q-1 8-12 9H22q-11-1-12-9z" fill="url(#bin)" />
  <path d="M4 3q30 18 60 0" fill="none" stroke="#a4a9ac" stroke-width="1.500" />
  <path d="M10 59q1 8 12 9h24q11-1 12-9-24 8-48 0z" fill="#9ea4a8" opacity="0.500" />`;

interface DockApp {
  name: string;
  art: unknown;
  running?: boolean;
  badge?: number;
}

@customElement("app-dock")
export class AppDock extends LitElement {
  static styles = css`
    :host {
      display: flex;
      justify-content: center;
      padding: 8px 24px 10px;
      font-family: Inter, "Liberation Sans", sans-serif;
    }
    .dock {
      display: flex;
      gap: 20px;
      padding: 14px 14px 2px;
      border: 2px solid #5c3a41;
      border-radius: 32px;
      background: #3d161e;
    }
    .app {
      position: relative;
      display: flex;
      flex-direction: column;
      align-items: center;
      gap: 10px;
      border: 0;
      padding: 0;
      background: none;
      font: inherit;
    }
    .art {
      display: block;
      overflow: visible;
    }
    .dot {
      width: 8px;
      height: 8px;
      border-radius: 50%;
    }
    .dot.running {
      background: #c29aa1;
    }
    .divider {
      width: 2px;
      height: 78px;
      margin: -2px 9px 0;
      background: #6e4b52;
    }
    .badge {
      position: absolute;
      top: -8px;
      right: -10px;
      width: 32px;
      height: 32px;
      border-radius: 50%;
      background: #e2493d;
      color: #fff;
      font-size: 20px;
      line-height: 32px;
      text-align: center;
    }
  `;

  private groups: DockApp[][] = [
    [
      { name: "Finder", art: FINDER, running: true },
      { name: "Launchpad", art: LAUNCHPAD },
      { name: "Safari", art: SAFARI },
      { name: "Messages", art: MESSAGES },
      { name: "Photos", art: PHOTOS },
      { name: "Mail", art: MAIL },
      { name: "Maps", art: MAPS },
      { name: "Podcasts", art: PODCASTS },
      { name: "FaceTime", art: FACETIME },
      { name: "Calendar", art: CALENDAR },
      { name: "Contacts", art: CONTACTS },
      { name: "Reminders", art: REMINDERS },
      { name: "Notes", art: NOTES, running: true },
      { name: "TV", art: TV },
      { name: "Music", art: MUSIC },
      { name: "Keynote", art: KEYNOTE },
      { name: "Numbers", art: NUMBERS },
      { name: "Pages", art: PAGES },
      { name: "Zoom", art: ZOOM },
      { name: "Skype", art: SKYPE },
      { name: "Terminal", art: TERMINAL },
      { name: "App Store", art: APPSTORE },
      { name: "System Preferences", art: SETTINGS, badge: 1 },
    ],
    [
      { name: "Chrome", art: CHROME, running: true },
      { name: "Postman", art: POSTMAN, running: true },
      { name: "Preview", art: PREVIEW },
    ],
    [
      { name: "Downloads", art: PDF },
      { name: "Trash", art: TRASH },
    ],
  ];

  render() {
    return html`<nav class="dock" aria-label="Dock">
      ${this.groups.map(
        (group, i) => html`${i ? html`<span class="divider"></span>` : nothing}
        ${group.map(
          (app) => html`<button type="button" class="app" aria-label=${app.name}>
            <svg class="art" width="68" height="68" viewBox="0 0 68 68" aria-hidden="true">${app.art}</svg>
            <span class=${classMap({ dot: true, running: !!app.running })}></span>
            ${app.badge ? html`<span class="badge">${app.badge}</span>` : nothing}
          </button>`
        )}`
      )}
    </nav>`;
  }
}

/* ---------- desktop ---------- */

@customElement("app-root")
export class AppRoot extends LitElement {
  static styles = css`
    :host {
      display: flex;
      flex-direction: column;
      min-height: 100vh;
      background: linear-gradient(180deg, #34638f 0, #201f4f 60px, #1d0508 94%, #3a0713 100%);
    }
    .browser {
      flex: 1;
    }
  `;

  render() {
    return html`
      <menu-bar></menu-bar>
      <browser-window class="browser"><login-card></login-card></browser-window>
      <app-dock></app-dock>
    `;
  }
}
